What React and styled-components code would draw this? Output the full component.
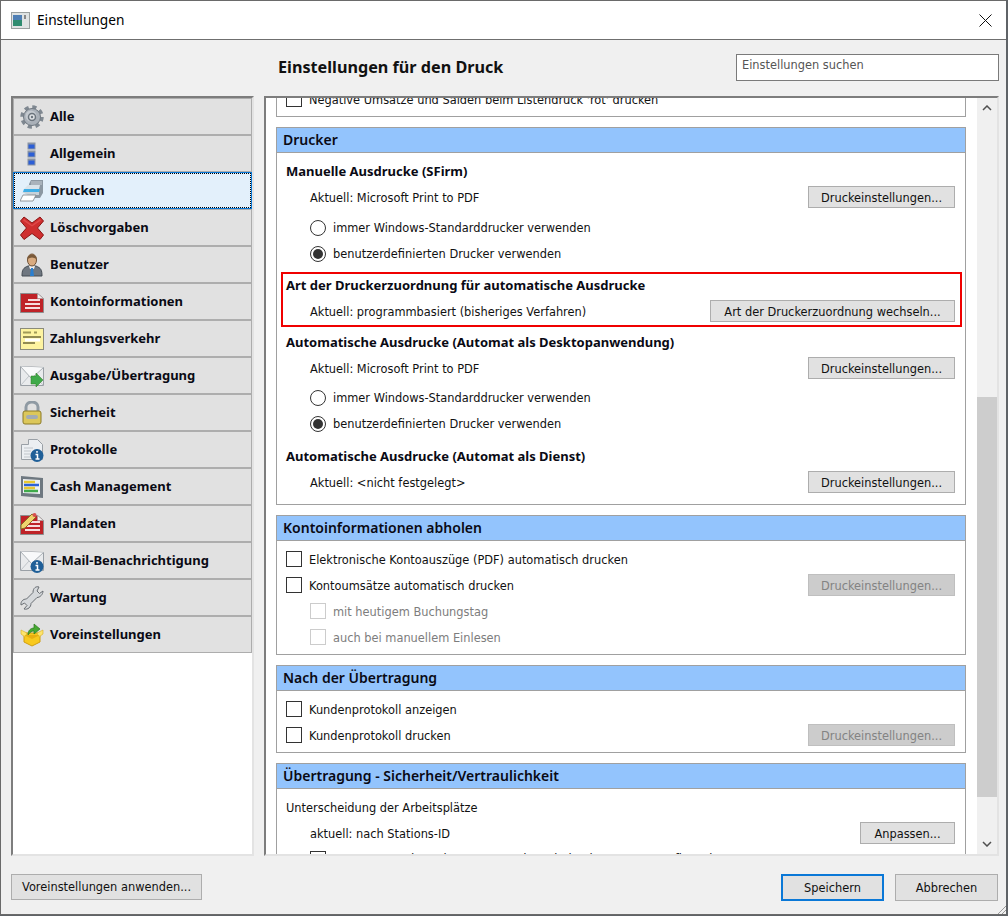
import styled, { createGlobalStyle } from 'styled-components';

const GlobalStyle = createGlobalStyle`
  html, body { margin: 0; padding: 0; background: #5f6367; }
  body { font-family: "DejaVu Sans", "Noto Sans", sans-serif; font-size: 11.4px; color: #111; }
  * { box-sizing: border-box; }
`;

const Dialog = styled.div`
  position: relative;
  width: 1006px;
  height: 915px;
  border: 1px solid #6a6a6a;
  border-width: 1px 0 1px 1px;
  background: #f0f0f0;
  display: flex;
  flex-direction: column;
`;

const TitleBar = styled.div`
  height: 39px;
  flex: none;
  background: #fff;
  border-bottom: 1px solid #6f6f6f;
  display: flex;
  align-items: center;
  padding: 0 14px 0 10px;
  gap: 7px;
`;

const TitleText = styled.span`
  flex: 1;
  padding-bottom: 2px;
  font-family: "Noto Sans", sans-serif;
  font-size: 13.7px;
  color: #000;
`;

const Header = styled.div`
  height: 56px;
  flex: none;
  display: flex;
  align-items: center;
  padding: 0 7px 2px 277px;
  justify-content: space-between;
`;

const HeaderTitle = styled.h1`
  margin: 0;
  font-family: "Noto Sans", sans-serif;
  font-size: 16.2px;
  font-weight: 700;
  color: #111;
`;

const SearchBox = styled.div`
  width: 263px;
  height: 27px;
  background: #fff;
  border: 1px solid #7a7a7a;
  padding: 3px 5px;
  color: #555;
`;

const Body = styled.div`
  height: 760px;
  flex: none;
  display: flex;
  padding-left: 10px;
  gap: 10px;
`;

const Sidebar = styled.nav`
  width: 243px;
  background: #fff;
  border: 2px solid #e3e3e3;
  border-top-color: #7d7d7d;
  border-left-color: #7d7d7d;
  display: flex;
  flex-direction: column;
`;

const SideItem = styled.div`
  height: 37px;
  flex: none;
  display: flex;
  align-items: center;
  gap: 6px;
  padding: 0 0 0 6px;
  background: ${({ $active }) => ($active ? '#e3f0fb' : '#e1e1e1')};
  border: 1px solid ${({ $active }) => ($active ? '#0a78d7' : '#adadad')};
  outline: ${({ $active }) => ($active ? '1px dotted #000' : 'none')};
  outline-offset: -2px;
`;

const SideLabel = styled.span`
  padding-bottom: 2px;
  font-family: "Noto Sans", sans-serif;
  font-weight: 700;
  font-size: 13px;
  color: #0a0a14;
`;

const IconSvg = styled.svg`
  width: 24px;
  height: 24px;
  flex: none;
`;

const AppIconSvg = styled.svg`
  width: 19px;
  height: 17px;
  flex: none;
`;

const ScrollFrame = styled.div`
  width: 735px;
  display: flex;
  background: #fff;
  border: 2px solid #e3e3e3;
  border-top-color: #7d7d7d;
  border-left-color: #7d7d7d;
  overflow: hidden;
`;

const Viewport = styled.div`
  flex: 1;
  overflow: hidden;
  padding: 0 11px 0 10px;
`;

const Content = styled.div`
  margin-top: -42px;
  display: flex;
  flex-direction: column;
  gap: 10px;
`;

const Section = styled.section`
  border: 1px solid #a0a0a0;
  border-top: ${({ $bare }) => ($bare ? 'none' : '1px solid #a0a0a0')};
  padding-bottom: ${({ $pad }) => $pad || 0}px;
`;

const SectionHead = styled.div`
  height: 25px;
  background: #93c4fd;
  border-bottom: 1px solid #a0a0a0;
  padding: 0 0 2px 6px;
  display: flex;
  align-items: center;
  font-family: "Noto Sans", sans-serif;
  font-weight: 600;
  font-size: 14px;
  color: #0a0a14;
`;

const Row = styled.div`
  height: ${({ $h }) => $h || 26}px;
  margin-top: ${({ $mt }) => $mt || 0}px;
  display: flex;
  align-items: center;
  padding-left: ${({ $indent }) => $indent || 9}px;
  padding-right: 10px;
  gap: 7px;
  color: ${({ $off }) => ($off ? '#7d7d7d' : '#111')};
`;

const ClippedRow = styled(Row)`
  height: 60px;
  align-items: flex-end;
  padding-bottom: 9px;
`;

const Label = styled.span`
  padding-top: 2px;
`;

const SubTitle = styled.span`
  font-family: "Noto Sans", sans-serif;
  font-weight: 700;
  font-size: 13px;
  color: #0a0a14;
`;

const Grow = styled.span`
  flex: 1;
`;

const Check = styled.span`
  width: 16px;
  height: 16px;
  flex: none;
  background: #fff;
  border: 1px solid ${({ $off }) => ($off ? '#cccccc' : '#333')};
`;

const Radio = styled.span`
  width: 16px;
  height: 16px;
  flex: none;
  margin-top: 2px;
  border-radius: 50%;
  background: #fff;
  border: 1px solid #333;
  display: flex;
  align-items: center;
  justify-content: center;
  &::after {
    content: '';
    width: 10px;
    height: 10px;
    border-radius: 50%;
    background: ${({ $on }) => ($on ? '#333' : 'transparent')};
  }
`;

const Button = styled.button`
  height: 22px;
  flex: none;
  padding: 1px 0 0;
  width: ${({ $w }) => $w || 147}px;
  font: inherit;
  border: 1px solid ${({ $off }) => ($off ? '#bfbfbf' : '#adadad')};
  color: ${({ $off }) => ($off ? '#838383' : '#111')};
  background: ${({ $off }) => ($off ? '#cccccc' : '#e1e1e1')};
`;

const Highlight = styled.div`
  border: 2px solid #f00000;
  margin: 6px 3px 0 4px;
  height: 55px;
  display: flex;
  flex-direction: column;
  gap: 4px;
`;

const HighRow = styled(Row)`
  height: 22px;
  padding-left: ${({ $indent }) => $indent || 3}px;
  padding-right: 5px;
`;

const ScrollBar = styled.div`
  width: 20px;
  flex: none;
  background: #f0f0f0;
  display: flex;
  flex-direction: column;
`;

const ScrollArrow = styled.div`
  height: 20px;
  flex: none;
  display: flex;
  align-items: center;
  justify-content: center;
`;

const ScrollTrack = styled.div`
  flex: 1;
  display: flex;
  flex-direction: column;
  padding-top: 279px;
  padding-bottom: 37px;
`;

const ScrollThumb = styled.div`
  flex: 1;
  background: #cdcdcd;
`;

const Footer = styled.div`
  flex: 1;
  display: flex;
  align-items: flex-start;
  padding: 18px 8px 0 10px;
`;

const FootButton = styled.button`
  height: ${({ $h }) => $h || 27}px;
  width: ${({ $w }) => $w}px;
  margin-left: ${({ $gap }) => $gap || 0}px;
  padding: 0;
  font: inherit;
  color: #111;
  background: #e1e1e1;
  border: ${({ $primary }) => ($primary ? '2px solid #0a78d7' : '1px solid #adadad')};
`;

const Spacer = styled.div`
  flex: 1;
`;

const Grip = styled.svg`
  position: absolute;
  right: 0;
  bottom: 0;
  width: 9px;
  height: 9px;
`;

const Gear = () => (
  <IconSvg viewBox="0 0 24 24">
    <circle cx="12" cy="12" r="10" fill="none" stroke="#7f8891" strokeWidth="3.500" strokeDasharray="4.200 3.650" />
    <circle cx="12" cy="12" r="8.500" fill="#a9b0b8" stroke="#6f7881" />
    <circle cx="11" cy="11" r="5.500" fill="#c4c9cf" />
    <circle cx="12" cy="12" r="3.500" fill="#dde0e3" stroke="#6b747d" strokeWidth="1.500" />
    <circle cx="12" cy="12" r="1.200" fill="#6b747d" />
  </IconSvg>
);

const Blocks = () => (
  <IconSvg viewBox="0 0 24 24">
    {[0, 8, 16].map((y) => (
      <g key={y}>
        <rect x="7.500" y={y + 0.5} width="8" height="7" fill="#8a94a3" />
        <rect x="8.500" y={y + 2.5} width="6" height="4" fill="#2c5fd6" />
      </g>
    ))}
  </IconSvg>
);

const Printer = () => (
  <IconSvg viewBox="0 0 24 24">
    <path d="M9 5l2-4h12v13l-3 5H9z" fill="#8c98a3" />
    <path d="M11 2h11v4H11z" fill="#a9b3bc" />
    <path d="M5 9l3-3h12l-1 4H4z" fill="#d9e3ea" />
    <path d="M4 10h16l-1 3H3z" fill="#3faee6" />
    <path d="M2 13h17v3H8z" fill="#c8d2d9" />
    <path d="M3 16h13l-3 6H0z" fill="#fff" stroke="#7b8186" strokeWidth="0.800" />
  </IconSvg>
);

const RedX = () => (
  <IconSvg viewBox="0 0 24 24">
    <path d="M4 1l8 6 8-6 3.500 4-6 7 6 7-3.500 4.500-8-6-8 6L.5 19l6-7-6-7z" fill="#cf2f2f" stroke="#8b1414" />
    <path d="M4 3l8 6 8-6 1 1.500-9 6-9-6z" fill="#e04a4a" />
  </IconSvg>
);

const UserIcon = () => (
  <IconSvg viewBox="0 0 24 24">
    <path d="M2 23c0-6 1-8 6-10h8c5 2 6 4 6 10z" fill="#6f7780" stroke="#454c54" />
    <path d="M9 13h6l-1 3h-4z" fill="#eee" />
    <path d="M11 15h2l1 8h-4z" fill="#2a7fd0" />
    <ellipse cx="12" cy="7" rx="4.500" ry="6" fill="#d9ab80" stroke="#6e5136" />
    <path d="M7.500 6c-1-6 10-6 9 0-3-2-6-2-9 0z" fill="#7a5a3a" />
  </IconSvg>
);

const RedDoc = ({ pencil }) => (
  <IconSvg viewBox="0 0 24 24">
    <path d="M.5 3.500h17l6 5v14H.5z" fill="#bf2227" stroke="#8d8d8d" />
    <path d="M17.500 3.500l6 5h-6z" fill="#f0f0f0" stroke="#9c9c9c" strokeWidth="0.500" />
    <path d="M8 10h12M5 14h15M5 18h15" stroke="#f6dcdc" strokeWidth="1.800" />
    {pencil && <path d="M1 13L12 2l4 3L5 16l-4 1z" fill="#efd36e" stroke="#8a6a20" />}
    {pencil && <circle cx="14.500" cy="3" r="2" fill="#d85050" />}
  </IconSvg>
);

const Note = () => (
  <IconSvg viewBox="0 0 24 24">
    <rect x="0.500" y="1.500" width="23" height="21" fill="#fdf3a0" stroke="#8b8b7a" />
    <path d="M3 5.500h8M14 5.500h3" stroke="#a09a58" strokeWidth="2" />
    <path d="M3 10h18M3 16h12" stroke="#6f6a3a" strokeWidth="1.500" />
    <path d="M5 13h15" stroke="#fff" strokeWidth="3" />
  </IconSvg>
);

const Mail = ({ children }) => (
  <IconSvg viewBox="0 0 24 24">
    <path d="M.5 2.500l23 1v18H.5z" fill="#e9ebed" stroke="#9aa0a6" />
    <path d="M.5 2.500l11 12 12-11" fill="#f8f9fa" stroke="#aab0b5" />
    <path d="M1 21l8-9M23 21l-8-9" fill="none" stroke="#c0c5ca" />
    {children}
  </IconSvg>
);

const InfoBadge = () => (
  <g>
    <circle cx="17" cy="17.500" r="6.500" fill="#1f5f98" />
    <path d="M17 13v1.800M15.500 16.500H17.500v4.500M15.500 21h4" stroke="#fff" strokeWidth="1.500" fill="none" />
  </g>
);

const Lock = () => (
  <IconSvg viewBox="0 0 24 24">
    <path d="M6 11V6a6 5 0 0 1 12 0v5" fill="none" stroke="#8f9aa3" strokeWidth="3" />
    <rect x="3" y="10" width="18" height="13" rx="2" fill="#dcc75a" stroke="#8c7b28" />
    <rect x="6" y="14" width="12" height="4" rx="2" fill="#a2abb3" />
  </IconSvg>
);

const Protocol = () => (
  <IconSvg viewBox="0 0 24 24">
    <path d="M1.500 6.500h7v-5h9l5 5v15h-21z" fill="#eceff2" stroke="#9aa0a6" />
    <path d="M4 10h9M4 13h7M4 16h7M4 19h7" stroke="#c0c5ca" />
    <InfoBadge />
  </IconSvg>
);

const Cash = () => (
  <IconSvg viewBox="0 0 24 24">
    <path d="M1 1l22 2v20L1 21z" fill="#6e7880" />
    <path d="M3 4l17 1v14L3 18z" fill="#eef1f3" />
    <path d="M4 7h11" stroke="#e8c832" strokeWidth="2.500" />
    <path d="M4 10h15" stroke="#2f62d8" strokeWidth="2.500" />
    <path d="M4 13h11" stroke="#e8c832" strokeWidth="2.500" />
    <path d="M4 16h14" stroke="#3faa4a" strokeWidth="2.500" />
  </IconSvg>
);

const Wrench = () => (
  <IconSvg viewBox="0 0 24 24">
    <path d="M23 5l-3.500 2.500L17 5l2-4c-3-1-6 1-6 5.500L6.500 13C3 13 .5 15.500 1 19l3.500-2 2.500 2.500-3 3.500c4 1 7-2 7-5.500L17 11.500c3 0 6-3 6-6.500z" fill="#d6d9dc" stroke="#696e73" />
  </IconSvg>
);

const Box = () => (
  <IconSvg viewBox="0 0 24 24">
    <path d="M4 10h16v9l-8 4-8-4z" fill="#f8c91e" stroke="#d09e10" />
    <path d="M1 7l6 3-2 4-4-3zM23 7l-6 3 2 4 4-3z" fill="#fde46e" stroke="#d9ae20" strokeWidth="0.600" />
    <path d="M12 12l8 0-8 4-8-4z" fill="#e8ae10" />
    <path d="M8 12c0-5 3-7 6-7V1l6 5-6 5V8c-2 0-4 1-6 4z" fill="#46a832" stroke="#2c7a1e" strokeWidth="0.700" />
  </IconSvg>
);

const AppIcon = () => (
  <AppIconSvg viewBox="0 0 19 17">
    <rect x="0.500" y="0.500" width="18" height="16" fill="#dfe3e3" stroke="#9aa0a0" />
    <rect x="2" y="3" width="9" height="11" fill="#2f8c70" />
    <rect x="2" y="3" width="9" height="5" fill="#4f7fb5" />
    <rect x="13" y="3" width="2" height="4" fill="#888" />
  </AppIconSvg>
);

const navItems = [
  ['Alle', <Gear />],
  ['Allgemein', <Blocks />],
  ['Drucken', <Printer />],
  ['Löschvorgaben', <RedX />],
  ['Benutzer', <UserIcon />],
  ['Kontoinformationen', <RedDoc />],
  ['Zahlungsverkehr', <Note />],
  ['Ausgabe/Übertragung', <Mail><path d="M11 12h5V9l7 7-7 7v-3h-5z" fill="#3faa4a" stroke="#2c7a1e" strokeWidth="0.500" /></Mail>],
  ['Sicherheit', <Lock />],
  ['Protokolle', <Protocol />],
  ['Cash Management', <Cash />],
  ['Plandaten', <RedDoc pencil />],
  ['E-Mail-Benachrichtigung', <Mail><InfoBadge /></Mail>],
  ['Wartung', <Wrench />],
  ['Voreinstellungen', <Box />],
];

const App = () => (
  <>
    <GlobalStyle />
    <Dialog>
      <TitleBar>
        <AppIcon />
        <TitleText>Einstellungen</TitleText>
        <svg width="13" height="13" viewBox="0 0 13 13">
          <path d="M.5.500l12 12M12.500.500l-12 12" stroke="#111" fill="none" />
        </svg>
      </TitleBar>
      <Header>
        <HeaderTitle>Einstellungen für den Druck</HeaderTitle>
        <SearchBox>Einstellungen suchen</SearchBox>
      </Header>
      <Body>
        <Sidebar>
          {navItems.map(([label, icon]) => (
            <SideItem key={label} $active={label === 'Drucken'}>
              {icon}
              <SideLabel>{label}</SideLabel>
            </SideItem>
          ))}
        </Sidebar>
        <ScrollFrame>
          <Viewport>
            <Content>
              <Section $bare>
                <ClippedRow>
                  <Check />
                  Negative Umsätze und Salden beim Listendruck 'rot' drucken
                </ClippedRow>
              </Section>
              <Section $pad={11}>
                <SectionHead>Drucker</SectionHead>
                <Row $h={26} $mt={5}><SubTitle>Manuelle Ausdrucke (SFirm)</SubTitle></Row>
                <Row $indent={33} $h={22} $mt={2}>
                  <Label>Aktuell: Microsoft Print to PDF</Label><Grow />
                  <Button>Druckeinstellungen...</Button>
                </Row>
                <Row $indent={33} $mt={6}><Radio /><Label>immer Windows-Standarddrucker verwenden</Label></Row>
                <Row $indent={33}><Radio $on /><Label>benutzerdefinierten Drucker verwenden</Label></Row>
                <Highlight>
                  <HighRow><SubTitle>Art der Druckerzuordnung für automatische Ausdrucke</SubTitle></HighRow>
                  <HighRow $indent={27}>
                    <Label>Aktuell: programmbasiert (bisheriges Verfahren)</Label><Grow />
                    <Button $w={245}>Art der Druckerzuordnung wechseln...</Button>
                  </HighRow>
                </Highlight>
                <Row $h={30}><SubTitle>Automatische Ausdrucke (Automat als Desktopanwendung)</SubTitle></Row>
                <Row $indent={33} $h={22}>
                  <Label>Aktuell: Microsoft Print to PDF</Label><Grow />
                  <Button>Druckeinstellungen...</Button>
                </Row>
                <Row $indent={33} $mt={5}><Radio /><Label>immer Windows-Standarddrucker verwenden</Label></Row>
                <Row $indent={33}><Radio $on /><Label>benutzerdefinierten Drucker verwenden</Label></Row>
                <Row $h={30} $mt={5}><SubTitle>Automatische Ausdrucke (Automat als Dienst)</SubTitle></Row>
                <Row $indent={33} $h={22}>
                  <Label>Aktuell: &lt;nicht festgelegt&gt;</Label><Grow />
                  <Button>Druckeinstellungen...</Button>
                </Row>
              </Section>
              <Section $pad={4}>
                <SectionHead>Kontoinformationen abholen</SectionHead>
                <Row $mt={5}><Check /><Label>Elektronische Kontoauszüge (PDF) automatisch drucken</Label></Row>
                <Row>
                  <Check /><Label>Kontoumsätze automatisch drucken</Label><Grow />
                  <Button $off>Druckeinstellungen...</Button>
                </Row>
                <Row $indent={33} $off><Check $off /><Label>mit heutigem Buchungstag</Label></Row>
                <Row $indent={33} $off><Check $off /><Label>auch bei manuellem Einlesen</Label></Row>
              </Section>
              <Section $pad={4}>
                <SectionHead>Nach der Übertragung</SectionHead>
                <Row $mt={5}><Check /><Label>Kundenprotokoll anzeigen</Label></Row>
                <Row>
                  <Check /><Label>Kundenprotokoll drucken</Label><Grow />
                  <Button $off>Druckeinstellungen...</Button>
                </Row>
              </Section>
              <Section>
                <SectionHead>Übertragung - Sicherheit/Vertraulichkeit</SectionHead>
                <Row $mt={5}><Label>Unterscheidung der Arbeitsplätze</Label></Row>
                <Row $indent={33}>
                  <Label>aktuell: nach Stations-ID</Label><Grow />
                  <Button $w={95}>Anpassen...</Button>
                </Row>
                <Row $indent={33}><Check />Auswertungsdaten je Benutzer oder Arbeitsplatz separat aufbewahren</Row>
              </Section>
            </Content>
          </Viewport>
          <ScrollBar>
            <ScrollArrow>
              <svg width="10" height="6" viewBox="0 0 10 6"><path d="M1 5l4-4 4 4" fill="none" stroke="#505050" strokeWidth="1.500" /></svg>
            </ScrollArrow>
            <ScrollTrack><ScrollThumb /></ScrollTrack>
            <ScrollArrow>
              <svg width="10" height="6" viewBox="0 0 10 6"><path d="M1 1l4 4 4-4" fill="none" stroke="#505050" strokeWidth="1.500" /></svg>
            </ScrollArrow>
          </ScrollBar>
        </ScrollFrame>
      </Body>
      <Footer>
        <FootButton $w={191} $h={26}>Voreinstellungen anwenden...</FootButton>
        <Spacer />
        <FootButton $w={103} $primary>Speichern</FootButton>
        <FootButton $w={103} $gap={11}>Abbrechen</FootButton>
      </Footer>
      <Grip viewBox="0 0 9 9">
        <path d="M9 1L1 9M9 5L5 9" stroke="#9a9a9a" fill="none" />
      </Grip>
    </Dialog>
  </>
);

export default App;
